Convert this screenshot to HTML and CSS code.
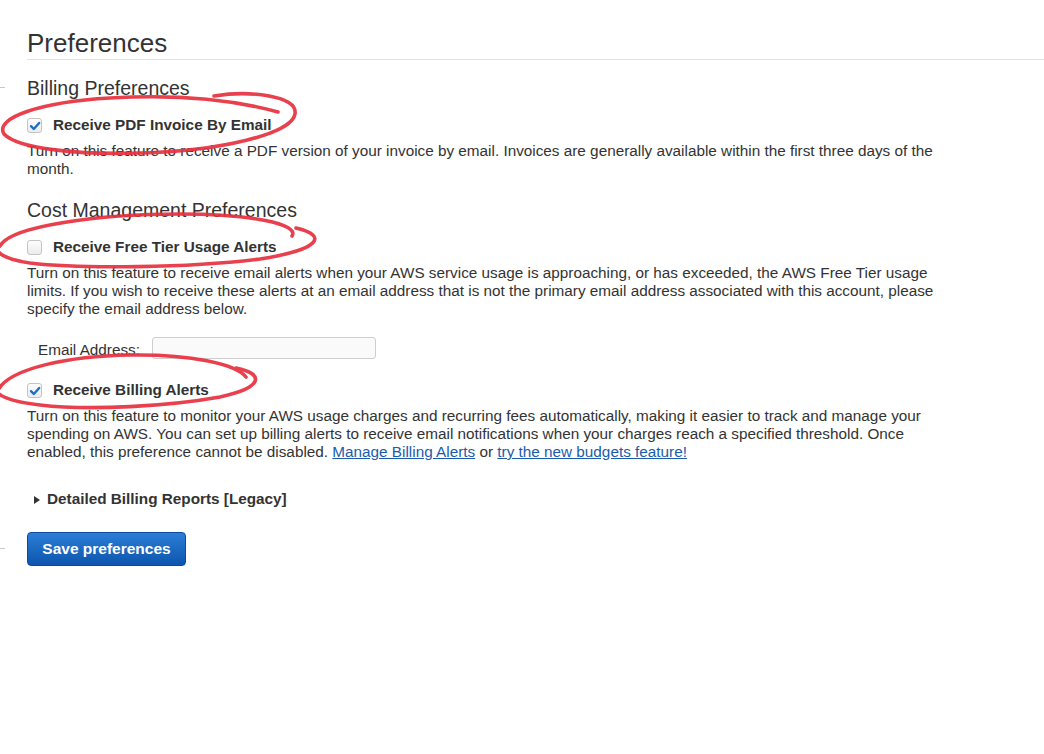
FILE: index.html
```html
<!DOCTYPE html>
<html lang="en">
<head>
<meta charset="utf-8">
<title>Preferences</title>
<link rel="stylesheet" href="styles.css">
</head>
<body>
<div class="page">
  <h1 class="title">Preferences</h1>

  <h2 class="section">Billing Preferences</h2>
  <div class="option">
    <span class="check checked"><svg width="14" height="14" viewBox="0 0 14 14"><path d="M3 7.2 L5.8 10 L11.2 4" fill="none" stroke="#1b6fc8" stroke-width="2.4" stroke-linecap="round" stroke-linejoin="round"/></svg></span>
    <span class="option-label">Receive PDF Invoice By Email</span>
  </div>
  <p class="desc">Turn on this feature to receive a PDF version of your invoice by email. Invoices are generally available within the first three days of the month.</p>

  <h2 class="section section-2">Cost Management Preferences</h2>
  <div class="option">
    <span class="check"></span>
    <span class="option-label">Receive Free Tier Usage Alerts</span>
  </div>
  <p class="desc">Turn on this feature to receive email alerts when your AWS service usage is approaching, or has exceeded, the AWS Free Tier usage limits. If you wish to receive these alerts at an email address that is not the primary email address associated with this account, please specify the email address below.</p>

  <div class="email-row">
    <span class="email-label">Email Address:</span>
    <span class="email-input"></span>
  </div>

  <div class="option option-3">
    <span class="check checked"><svg width="14" height="14" viewBox="0 0 14 14"><path d="M3 7.2 L5.8 10 L11.2 4" fill="none" stroke="#1b6fc8" stroke-width="2.4" stroke-linecap="round" stroke-linejoin="round"/></svg></span>
    <span class="option-label">Receive Billing Alerts</span>
  </div>
  <p class="desc">Turn on this feature to monitor your AWS usage charges and recurring fees automatically, making it easier to track and manage your spending on AWS. You can set up billing alerts to receive email notifications when your charges reach a specified threshold. Once enabled, this preference cannot be disabled. <a class="link" href="#">Manage Billing Alerts</a> or <a class="link" href="#">try the new budgets feature!</a></p>

  <div class="reports">
    <span class="caret"></span>
    <span class="reports-label">Detailed Billing Reports [Legacy]</span>
  </div>

  <div class="actions">
    <span class="save-btn">Save preferences</span>
  </div>
</div>

<svg class="annotations" width="1044" height="754" viewBox="0 0 1044 754">
  <g fill="none" stroke="#e8303f" stroke-width="3.6" stroke-linecap="round" stroke-linejoin="round" opacity="0.92">
    <path d="M214 96 C 250 90, 298 96, 295 114 C 292 134, 220 151, 140 153 C 80 155, 18 149, 4 134 C -6 118, 40 102, 110 98 C 160 95, 220 96, 278 112"/>
    <path d="M0 246 C 10 226, 100 214, 180 214 C 250 214, 300 224, 292 236"/>
    <path d="M296 228 C 330 236, 318 250, 260 259 C 190 268, 80 269, 30 263 C 10 260, 0 255, -2 251"/>
    <path d="M-2 390 C 10 368, 70 356, 130 355 C 190 354, 236 364, 246 377"/>
    <path d="M236 368 C 266 374, 262 388, 220 397 C 170 406, 90 411, 40 405 C 15 402, 2 397, -2 393"/>
  </g>
</svg>
<span class="edge-mark edge-1"></span>
<span class="edge-mark edge-2"></span>
</body>
</html>
```

FILE: styles.css
```css
html, body {
  margin: 0;
  padding: 0;
  background: #ffffff;
}

body {
  font-family: "Liberation Sans", Arial, sans-serif;
  color: #333333;
  width: 1044px;
  height: 754px;
  overflow: hidden;
  position: relative;
}

.page {
  padding-left: 27px;
}

.title {
  margin: 28px 0 0;
  padding-bottom: 1px;
  font-size: 26px;
  line-height: 30px;
  font-weight: normal;
  color: #333;
  border-bottom: 1px solid #e2e2e2;
}

.section {
  margin: 16px 0 0;
  font-size: 19.5px;
  line-height: 24px;
  font-weight: normal;
  color: #333;
}

.section-2 {
  margin-top: 20px;
}

.option {
  display: flex;
  align-items: center;
  gap: 11px;
  margin-top: 15px;
  height: 20px;
}

.option-3 {
  margin-top: 21px;
}

.check {
  width: 13px;
  height: 13px;
  border: 1px solid #c4c4c4;
  border-radius: 3px;
  background: linear-gradient(#fdfdfd, #ececec);
  position: relative;
  flex: none;
}

.check svg {
  position: absolute;
  left: 0;
  top: 0;
}

.option-label {
  font-size: 15.3px;
  font-weight: bold;
  line-height: 20px;
  color: #333;
}

.desc {
  margin: 7px 0 0;
  width: 930px;
  font-size: 15.3px;
  line-height: 18px;
  color: #333;
}

.link {
  color: #1a5cab;
  text-decoration: underline;
}

.email-row {
  display: flex;
  align-items: center;
  margin-top: 19px;
  padding-left: 11px;
  gap: 12px;
  height: 22px;
}

.email-label {
  font-size: 15.3px;
  line-height: 18px;
  margin-top: 3px;
}

.email-input {
  width: 222px;
  height: 20px;
  border: 1px solid #cfcfcf;
  border-radius: 3px;
  background: #fafafa;
}

.reports {
  display: flex;
  align-items: center;
  gap: 7px;
  margin-top: 28px;
  padding-left: 7px;
  height: 20px;
}

.caret {
  width: 0;
  height: 0;
  border-top: 4.5px solid transparent;
  border-bottom: 4.5px solid transparent;
  border-left: 6px solid #333;
  margin-top: 1px;
}

.reports-label {
  font-size: 15.3px;
  font-weight: bold;
  color: #333;
}

.actions {
  margin-top: 23px;
}

.save-btn {
  display: inline-flex;
  align-items: center;
  justify-content: center;
  box-sizing: border-box;
  width: 159px;
  height: 34px;
  border: 1px solid #0c4b9c;
  border-radius: 4px;
  background: linear-gradient(#2b7ed6, #0d55ae);
  color: #ffffff;
  font-size: 15.5px;
  font-weight: bold;
}

.annotations {
  position: absolute;
  left: 0;
  top: 0;
  pointer-events: none;
}

.edge-mark {
  position: absolute;
  left: 0;
  width: 5px;
  height: 1px;
  background: #c8c8c8;
}

.edge-1 {
  top: 87px;
}

.edge-2 {
  top: 548px;
}
```
